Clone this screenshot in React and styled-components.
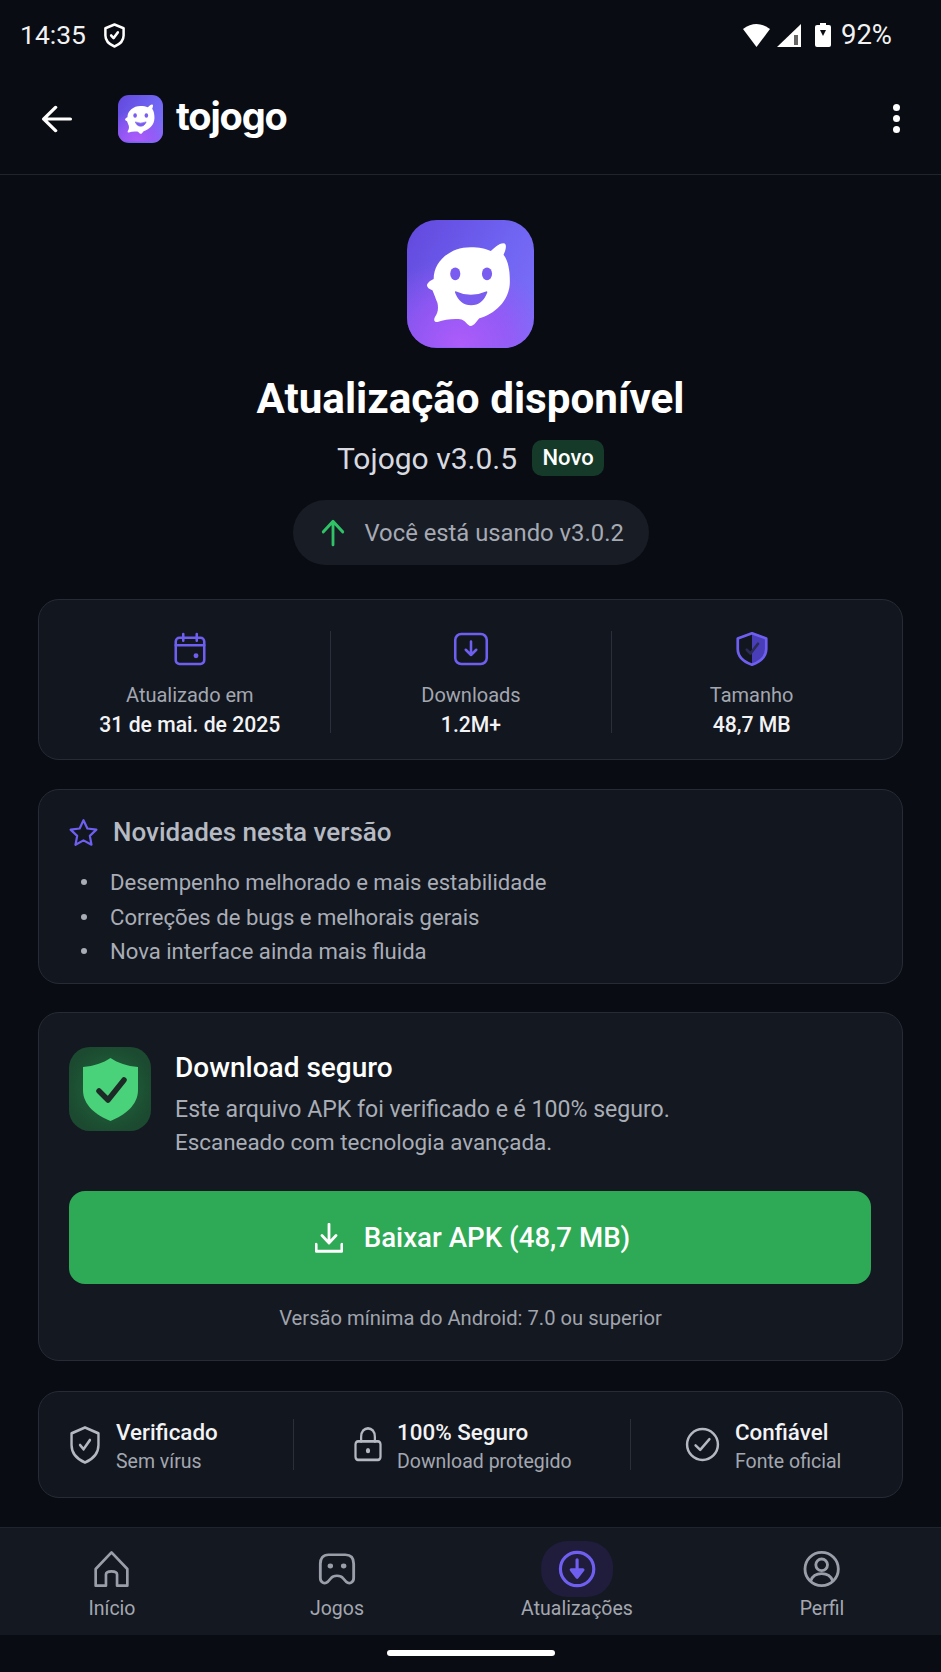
import React from "react";
import styled, { createGlobalStyle } from "styled-components";

const GlobalStyle = createGlobalStyle`
  html, body {
    margin: 0;
    padding: 0;
    background: #0a0c13;
  }
  * {
    box-sizing: border-box;
  }
`;

const PURPLE = "#6f5ff0";
const GREY = "#9a9ea8";

const BlobLogo = ({ id }) => (
  <svg viewBox="0 0 100 100" width="100%" height="100%">
    <defs>
      <radialGradient id={id} cx="0.42" cy="1" r="0.72">
        <stop offset="0" stopColor="#b05cfa" />
        <stop offset="0.55" stopColor="#a055f6" stopOpacity="0.7" />
        <stop offset="1" stopColor="#a055f6" stopOpacity="0" />
      </radialGradient>
    </defs>
    <rect width="100" height="100" fill={`url(#${id})`} />
    <path
      d="M50 21C57 21 62 22 66 24C69 22 72 18 76 18C79 18 78 23 76 27C80 32 81 40 81 48C81 64 68 74 57 77C55 79 53 83 50 83C48 83 46 79 43 78C37 77 30 78 24 80C21 80 21 78 22 76C24 73 25 70 24 65C22 60 21 57 20 55C17 54 15 52 16 50C17 48 19 47 21 46C21 32 34 21 50 21Z"
      fill="#fff"
    />
    <ellipse cx="38" cy="42" rx="4" ry="5" fill="#7a5cf0" />
    <ellipse cx="63" cy="42" rx="4" ry="5" fill="#7a5cf0" />
    <path
      d="M38.5 56.5Q50 62 62.5 56.5Q59 66 50.5 66Q42 66 38.5 56.5Z"
      fill="#7a5cf0"
      stroke="#7a5cf0"
      strokeWidth="1.5"
      strokeLinejoin="round"
    />
  </svg>
);

const IconSvg = styled.svg`
  flex: none;
  position: relative;
`;

const Icon = ({ size = 24, w, h, color = "currentColor", sw = 2, children }) => (
  <IconSvg
    width={w || size}
    height={h || size}
    viewBox="0 0 24 24"
    fill="none"
    stroke={color}
    strokeWidth={sw}
    strokeLinecap="round"
    strokeLinejoin="round"
    preserveAspectRatio="none"
  >
    {children}
  </IconSvg>
);

const SHIELD = "M12 1.5L21.5 5V12C21.5 17 17.5 20.5 12 22.5C6.5 20.5 2.5 17 2.5 12V5Z";

export default function App() {
  return (
    <>
      <GlobalStyle />
      <Page>
        <StatusBar>
          <StatusLeft>
            <StatusText>14:35</StatusText>
            <Icon w={23} h={25} color="#fff" sw={2.6}>
              <path d={SHIELD} />
              <path d="M8.5 12L11 14.5L15.5 9" />
            </Icon>
          </StatusLeft>
          <StatusRight>
            <svg width="27" height="24" viewBox="0 0 27 24">
              <path d="M0 6Q13.5 -4 27 6L13.5 24Z" fill="#fff" />
            </svg>
            <svg width="24" height="23" viewBox="0 0 24 23">
              <path d="M24 0V23H0Z" fill="#fff" />
              <rect x="17" y="11" width="4" height="10" fill="#666" />
            </svg>
            <Battery>
              <svg width="16" height="24" viewBox="0 0 16 24">
                <path d="M5 0H11V2H14Q16 2 16 4V22Q16 24 14 24H2Q0 24 0 22V4Q0 2 2 2H5Z" fill="#fff" />
                <path d="M5 7H11L8 13Z" fill="#0a0c13" />
              </svg>
            </Battery>
            <Percent>92%</Percent>
          </StatusRight>
        </StatusBar>

        <AppBar>
          <BackButton>
            <Icon w={32} h={28} color="#fff" sw={2.6}>
              <path d="M22 12H2M11 2L2 12L11 22" />
            </Icon>
          </BackButton>
          <LogoTile $size={45} $height={48} $radius={11}>
            <BlobLogo id="blobSmall" />
          </LogoTile>
          <Wordmark>tojogo</Wordmark>
          <Kebab>
            <Dot />
            <Dot />
            <Dot />
          </Kebab>
        </AppBar>

        <Content>
          <Hero>
            <LogoTile $size={127} $height={128} $radius={30}>
              <BlobLogo id="blobLarge" />
            </LogoTile>
            <Title>Atualização disponível</Title>
            <VersionRow>
              <VersionText>Tojogo v3.0.5</VersionText>
              <Badge>Novo</Badge>
            </VersionRow>
            <CurrentPill>
              <Icon w={26} h={28} color="#2fc266" sw={2.6}>
                <path d="M12 22V2M3 11L12 2L21 11" />
              </Icon>
              <span>Você está usando v3.0.2</span>
            </CurrentPill>
          </Hero>

          <StatCard>
            <Stat>
              <Icon size={36} color={PURPLE} sw={1.7}>
                <rect x="2.5" y="4.5" width="19" height="17.5" rx="2.5" />
                <path d="M2.5 9.5H21.5M7.5 2V6.5M16.5 2V6.5" />
                <circle cx="16" cy="16.5" r="0.8" fill={PURPLE} />
              </Icon>
              <StatLabel>Atualizado em</StatLabel>
              <StatValue>31 de mai. de 2025</StatValue>
            </Stat>
            <Stat>
              <Icon size={36} color={PURPLE} sw={1.7}>
                <rect x="1.5" y="2" width="21" height="20" rx="4" />
                <path d="M12 7V16M8.5 12.5L12 16L15.5 12.5" />
              </Icon>
              <StatLabel>Downloads</StatLabel>
              <StatValue>1.2M+</StatValue>
            </Stat>
            <Stat>
              <Icon size={36} color={PURPLE} sw={1.8}>
                <path d="M12 22.5C17.5 20.5 21.5 17 21.5 12V5L12 1.5Z" fill="#4a3db8" stroke="none" />
                <path d={SHIELD} />
                <path d="M8.5 12.5L11 15L16 8.5" stroke="#2a2a55" />
              </Icon>
              <StatLabel>Tamanho</StatLabel>
              <StatValue>48,7 MB</StatValue>
            </Stat>
          </StatCard>

          <NewsCard>
            <NewsHeader>
              <Icon size={31} color={PURPLE} sw={1.7}>
                <path d="M12 2.5L15 8.9L22 9.8L16.9 14.6L18.2 21.5L12 18.1L5.8 21.5L7.1 14.6L2 9.8L9 8.9Z" />
              </Icon>
              <NewsTitle>Novidades nesta versão</NewsTitle>
            </NewsHeader>
            <NewsList>
              <li>Desempenho melhorado e mais estabilidade</li>
              <li>Correções de bugs e melhorais gerais</li>
              <li>Nova interface ainda mais fluida</li>
            </NewsList>
          </NewsCard>

          <DownloadCard>
            <SafeRow>
              <SafeTile>
                <svg width="55" height="63" viewBox="0 0 55 63">
                  <path d="M27.5 0C35 5 44 8 55 9V32C55 47 42 57 27.5 63C13 57 0 47 0 32V9C11 8 20 5 27.5 0Z" fill="#4ad27a" />
                  <path d="M16 33L25 42L41 22" fill="none" stroke="#1d2b27" strokeWidth="5.5" strokeLinecap="round" strokeLinejoin="round" />
                </svg>
              </SafeTile>
              <div>
                <SafeTitle>Download seguro</SafeTitle>
                <SafeText $size={23.1}>Este arquivo APK foi verificado e é 100% seguro.</SafeText>
                <SafeText $size={22.4}>Escaneado com tecnologia avançada.</SafeText>
              </div>
            </SafeRow>
            <DownloadButton>
              <Icon w={28} h={30} color="#fff" sw={2.4}>
                <path d="M12 1V15M6 10L12 16L18 10M1 17V22.5H23V17" />
              </Icon>
              Baixar APK (48,7 MB)
            </DownloadButton>
            <MinVersion>Versão mínima do Android: 7.0 ou superior</MinVersion>
          </DownloadCard>

          <TrustCard>
            <Trust $pad={29} $width={254}>
              <Icon w={34} h={40} color="#b4b8c0" sw={1.7}>
                <path d={SHIELD} />
                <path d="M8.5 12L11 14.5L15.5 9" />
              </Icon>
              <TrustText>
                <TrustTitle>Verificado</TrustTitle>
                <TrustSub>Sem vírus</TrustSub>
              </TrustText>
            </Trust>
            <TrustDivider />
            <Trust $pad={59} $width={336}>
              <Icon w={30} h={37} color="#b4b8c0" sw={1.8}>
                <rect x="2" y="10" width="20" height="12" rx="2" />
                <path d="M6.5 10V7C6.5 3.5 9 1.5 12 1.5C15 1.5 17.5 3.5 17.5 7V10" />
                <circle cx="12" cy="16" r="0.8" fill="#b4b8c0" />
              </Icon>
              <TrustText>
                <TrustTitle>100% Seguro</TrustTitle>
                <TrustSub>Download protegido</TrustSub>
              </TrustText>
            </Trust>
            <TrustDivider />
            <Trust $pad={53} $width={272}>
              <Icon size={37} color="#b4b8c0" sw={1.6}>
                <circle cx="12" cy="12" r="10" />
                <path d="M7.5 12.5L10.5 15.5L16.5 8.5" />
              </Icon>
              <TrustText>
                <TrustTitle>Confiável</TrustTitle>
                <TrustSub>Fonte oficial</TrustSub>
              </TrustText>
            </Trust>
          </TrustCard>
        </Content>

        <BottomNav>
          <NavItem $center={112}>
            <NavIcon>
              <Icon w={38} h={38} color={GREY} sw={1.7}>
                <path d="M12 1.5L22 12V22.5H15.5V15.5Q15.5 13.5 12 13.5Q8.5 13.5 8.5 15.5V22.5H2V12Z" />
              </Icon>
            </NavIcon>
            <NavLabel>Início</NavLabel>
          </NavItem>
          <NavItem $center={337}>
            <NavIcon>
              <Icon w={40} h={36} color={GREY} sw={1.7}>
                <path d="M7 2.5H17C20.5 2.5 22 5 22 8.5V18C22 21 19.5 22.5 17.5 20.5L15.5 18Q14.5 16.5 12 16.5Q9.5 16.5 8.5 18L6.5 20.5C4.5 22.5 2 21 2 18V8.5C2 5 3.5 2.5 7 2.5Z" />
                <circle cx="8" cy="10" r="0.8" fill={GREY} />
                <circle cx="16" cy="10" r="0.8" fill={GREY} />
              </Icon>
            </NavIcon>
            <NavLabel>Jogos</NavLabel>
          </NavItem>
          <NavItem $center={577}>
            <NavIcon>
              <ActiveGlow />
              <Icon size={40} color={PURPLE} sw={1.9}>
                <circle cx="12" cy="12" r="10" />
                <path d="M12 6.5V14" />
                <path d="M8.5 12.5H15.5L12 17Z" fill={PURPLE} />
              </Icon>
            </NavIcon>
            <NavLabel>Atualizações</NavLabel>
          </NavItem>
          <NavItem $center={822}>
            <NavIcon>
              <Icon size={40} color={GREY} sw={1.7}>
                <circle cx="12" cy="12" r="10" />
                <circle cx="12" cy="9.5" r="3.5" />
                <path d="M5.5 19C6.5 16 9 14.8 12 14.8C15 14.8 17.5 16 18.5 19" />
              </Icon>
            </NavIcon>
            <NavLabel>Perfil</NavLabel>
          </NavItem>
        </BottomNav>

        <GestureArea>
          <HomeBar />
        </GestureArea>
      </Page>
    </>
  );
}

const Page = styled.div`
  width: 941px;
  height: 1672px;
  display: flex;
  flex-direction: column;
  overflow: hidden;
  background: #0a0c13;
  color: #fff;
  font-family: Roboto, "Liberation Sans", sans-serif;
`;

const StatusBar = styled.div`
  height: 70px;
  flex: none;
  display: flex;
  justify-content: space-between;
  align-items: center;
  padding: 0 49px 0 20px;
`;

const StatusLeft = styled.div`
  display: flex;
  align-items: center;
  gap: 17px;
`;

const StatusRight = styled.div`
  display: flex;
  align-items: center;
  gap: 7px;
`;

const Battery = styled.span`
  display: flex;
  margin: 0 3px 0 7px;
`;

const StatusText = styled.span`
  font-size: 26.5px;
  line-height: 30px;
  color: #f2f2f2;
`;

const Percent = styled(StatusText)`
  font-size: 27.5px;
`;

const AppBar = styled.div`
  height: 105px;
  flex: none;
  display: flex;
  align-items: center;
  padding: 0 41px 7px 41px;
  border-bottom: 1px solid #20242d;
`;

const BackButton = styled.div`
  display: flex;
  width: 77px;
`;

const LogoTile = styled.div`
  width: ${(p) => p.$size}px;
  height: ${(p) => p.$height}px;
  flex: none;
  overflow: hidden;
  border-radius: ${(p) => p.$radius}px;
  background: linear-gradient(120deg, #6248dc 0%, #6f63f2 55%, #7d72fa 100%);
`;

const Wordmark = styled.div`
  margin: 0 0 5px 13px;
  font-family: Inter, sans-serif;
  font-size: 38px;
  font-weight: 700;
  line-height: 44px;
  letter-spacing: -1.2px;
  color: #fff;
`;

const Kebab = styled.div`
  margin-left: auto;
  display: flex;
  flex-direction: column;
  gap: 4px;
`;

const Dot = styled.span`
  width: 7px;
  height: 7px;
  border-radius: 50%;
  background: #fff;
`;

const Content = styled.main`
  flex: 1;
  padding: 0 38px;
`;

const Hero = styled.section`
  display: flex;
  flex-direction: column;
  align-items: center;
  padding-top: 45px;
`;

const Title = styled.h1`
  margin: 24px 0 0;
  font-size: 42.2px;
  font-weight: 700;
  line-height: 54px;
  color: #fff;
`;

const VersionRow = styled.div`
  display: flex;
  align-items: center;
  gap: 15px;
  margin-top: 14px;
  height: 36px;
`;

const VersionText = styled.span`
  font-size: 30px;
  color: #d8dae0;
`;

const Badge = styled.span`
  width: 72px;
  height: 36px;
  border-radius: 10px;
  background: #153a29;
  text-align: center;
  font-size: 22px;
  font-weight: 500;
  line-height: 36px;
  color: #fff;
`;

const CurrentPill = styled.div`
  width: 356px;
  height: 65px;
  margin-top: 24px;
  display: flex;
  align-items: center;
  gap: 19px;
  padding-left: 27px;
  border-radius: 33px;
  background: #181c25;
  font-size: 23.8px;
  color: #a6aab3;
`;

const Card = styled.section`
  border: 1.5px solid #262b35;
  border-radius: 21px;
  background: #12161f;
`;

const StatCard = styled(Card)`
  height: 161px;
  margin-top: 34px;
  padding: 31px 10.5px 0;
  display: grid;
  grid-template-columns: repeat(3, 1fr);
`;

const Stat = styled.div`
  height: 102px;
  display: flex;
  flex-direction: column;
  align-items: center;
  & + & {
    border-left: 1px solid #2a2f39;
  }
`;

const StatLabel = styled.div`
  margin-top: 13px;
  font-size: 20px;
  line-height: 30px;
  color: #a3a7b0;
`;

const StatValue = styled.div`
  font-size: 21.2px;
  font-weight: 500;
  line-height: 30px;
  color: #f2f3f5;
`;

const NewsCard = styled(Card)`
  height: 195px;
  margin-top: 29px;
  padding: 26px 0 0 29px;
`;

const NewsHeader = styled.div`
  display: flex;
  align-items: center;
  gap: 14px;
  height: 32px;
`;

const NewsTitle = styled.h2`
  margin: 0;
  font-size: 26px;
  font-weight: 500;
  color: #b6bac3;
`;

const NewsList = styled.ul`
  margin: 17px 0 0;
  padding: 0;
  list-style: none;
  font-size: 22.1px;
  line-height: 34.5px;
  color: #a9adb6;
  li {
    display: flex;
    align-items: center;
    padding-left: 13px;
  }
  li::before {
    content: "";
    width: 6px;
    height: 6px;
    margin-right: 23px;
    border-radius: 50%;
    background: #a9adb6;
  }
`;

const DownloadCard = styled(Card)`
  height: 349px;
  margin-top: 28px;
  padding: 34px 30px 0;
  background: #141821;
`;

const SafeRow = styled.div`
  display: flex;
  gap: 24px;
`;

const SafeTile = styled.div`
  width: 82px;
  height: 84px;
  flex: none;
  display: flex;
  align-items: center;
  justify-content: center;
  border-radius: 21px;
  background: radial-gradient(circle at 50% 50%, #23693f 0%, #1b4a30 75%);
`;

const SafeTitle = styled.h2`
  margin: 1px 0 5px;
  font-size: 28px;
  font-weight: 500;
  line-height: 40px;
  color: #fff;
`;

const SafeText = styled.p`
  margin: 0;
  font-size: ${(p) => p.$size}px;
  line-height: 33px;
  color: #a9adb6;
`;

const DownloadButton = styled.button`
  width: 802px;
  height: 93px;
  margin-top: 32px;
  padding: 0 0 0 5px;
  display: flex;
  align-items: center;
  justify-content: center;
  gap: 21px;
  border: 0;
  border-radius: 16px;
  background: #2ea955;
  font-family: inherit;
  font-size: 27.7px;
  font-weight: 500;
  color: #fff;
`;

const MinVersion = styled.div`
  margin-top: 19px;
  text-align: center;
  font-size: 20.2px;
  line-height: 30px;
  color: #a0a4ad;
`;

const TrustCard = styled(Card)`
  height: 107px;
  margin-top: 30px;
  display: flex;
  align-items: center;
`;

const Trust = styled.div`
  width: ${(p) => p.$width}px;
  flex: none;
  display: flex;
  align-items: center;
  gap: 14px;
  padding-left: ${(p) => p.$pad}px;
`;

const TrustDivider = styled.span`
  width: 1px;
  height: 51px;
  flex: none;
  background: #2a2f39;
`;

const TrustText = styled.div`
  display: flex;
  flex-direction: column;
  padding-top: 5px;
`;

const TrustTitle = styled.div`
  font-size: 22.4px;
  font-weight: 500;
  line-height: 29.5px;
  color: #f2f3f5;
`;

const TrustSub = styled.div`
  font-size: 19.5px;
  line-height: 29.5px;
  color: #a3a7b0;
`;

const BottomNav = styled.nav`
  height: 108px;
  flex: none;
  position: relative;
  border-top: 1.5px solid #20242d;
  background: #141821;
`;

/* each tab is centred on its own x, the tabs are not evenly spaced in the picture */
const NavItem = styled.div`
  position: absolute;
  top: 13px;
  left: ${(p) => p.$center}px;
  transform: translateX(-50%);
  display: flex;
  flex-direction: column;
  align-items: center;
`;

const NavIcon = styled.div`
  position: relative;
  height: 56px;
  display: flex;
  align-items: center;
  justify-content: center;
`;

const ActiveGlow = styled.span`
  position: absolute;
  top: 0;
  left: 50%;
  width: 72px;
  height: 56px;
  transform: translateX(-50%);
  border-radius: 26px;
  background: #1f1c3c;
`;

const NavLabel = styled.span`
  margin-top: -3px;
  font-size: 19.5px;
  line-height: 30px;
  color: #a3a7b0;
`;

const GestureArea = styled.div`
  height: 37px;
  flex: none;
  display: flex;
  justify-content: center;
  padding-top: 15px;
`;

const HomeBar = styled.span`
  width: 168px;
  height: 6px;
  border-radius: 3px;
  background: #fff;
`;
